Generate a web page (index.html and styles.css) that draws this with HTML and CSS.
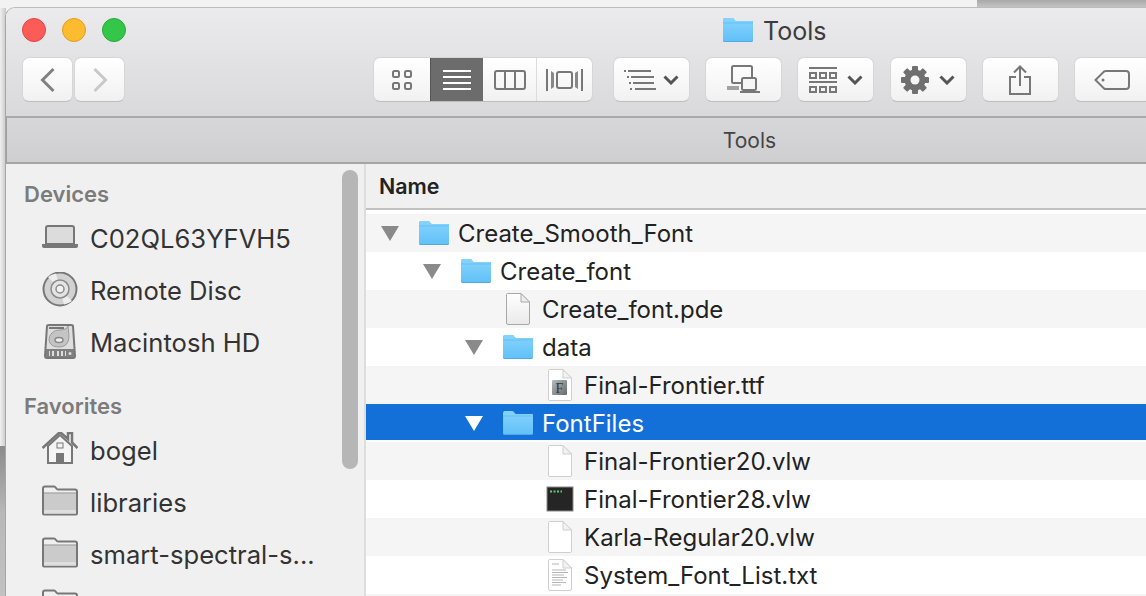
FILE: index.html
```html
<!DOCTYPE html>
<html lang="en">
<head>
    <meta charset="UTF-8">
    <title>Tools</title>
    <link rel="stylesheet" href="styles.css">
</head>
<body>
<svg class="defs" width="0" height="0">
    <defs>
        <linearGradient id="blue" x1="0" y1="0" x2="0" y2="1">
            <stop offset="0" stop-color="#86d4fc"/>
            <stop offset="1" stop-color="#62c1f8"/>
        </linearGradient>
        <linearGradient id="paper" x1="0" y1="0" x2="0" y2="1">
            <stop offset="0" stop-color="#ffffff"/>
            <stop offset="1" stop-color="#e9e9e9"/>
        </linearGradient>
        <linearGradient id="tile" x1="0" y1="0" x2="1" y2="1">
            <stop offset="0" stop-color="#b4babc"/>
            <stop offset="1" stop-color="#666b6d"/>
        </linearGradient>
        <symbol id="folder" viewBox="0 0 30 24">
            <path d="M0 3 Q0 0 2 0 H9 Q10.500 0 11.500 2 Q12 3 13 3 H29 Q30 3 30 4 V22.500 Q30 24 28.500 24 H1.500 Q0 24 0 22.500Z" fill="#4fabe3"/>
            <path d="M0 3 Q0 0 2 0 H9 Q10.500 0 11.500 2 Q12 3 13 3 H29 Q30 3 30 4 V21.500 Q30 23 28.500 23 H1.500 Q0 23 0 21.500Z" fill="url(#blue)"/>
            <path d="M0 5 H30" stroke="#5bbcf3" stroke-width="1" opacity=".7"/>
        </symbol>
        <symbol id="doc" viewBox="0 0 24 32">
            <path d="M1.500 .5 H15 L23.500 9 V30 Q23.500 31.500 22 31.500 H2 Q.5 31.500 .5 30 V1.500 Q.5 .5 1.500 .5Z" fill="#fff" stroke="#cfcfcf"/>
            <path d="M15 .5 V9 H23.500Z" fill="#f2f2f2" stroke="#cfcfcf"/>
        </symbol>
        <symbol id="greyfolder" viewBox="0 0 36 33">
            <path d="M1 28 V3 Q1 1 3 1 H12 Q13 1 14 2.500 Q15 4 16 4 H33 Q35 4 35 6 V28 Q35 29 34 29 H2 Q1 29 1 28Z" fill="#f0f0f0" stroke="#777" stroke-width="2"/>
            <path d="M2 8 H34 V25 H2Z" fill="#cbcbcb"/>
            <path d="M2 25 H34 V28 H2Z" fill="#dedede"/>
            <path d="M2 7.500 H34" stroke="#8c8c8c"/>
        </symbol>
        <symbol id="chev" viewBox="0 0 16 10">
            <path d="M1.500 1.500 L8 8 L14.500 1.500" fill="none" stroke="#555" stroke-width="3"/>
        </symbol>
    </defs>
</svg>

<div class="window">
    <header class="titlebar">
        <div class="title-row">
            <div class="lights">
                <span class="light red"></span>
                <span class="light yellow"></span>
                <span class="light green"></span>
            </div>
            <div class="title">
                <svg class="folder-icon"><use href="#folder"/></svg>
                <span class="title-text">Tools</span>
            </div>
        </div>
        <div class="toolbar">
            <div class="nav">
                <button class="btn nav-btn">
                    <svg width="16" height="26" viewBox="0 0 16 26"><path d="M13.500 2 L2.500 13 L13.500 24" fill="none" stroke="#808080" stroke-width="3"/></svg>
                </button>
                <button class="btn nav-btn">
                    <svg width="16" height="26" viewBox="0 0 16 26"><path d="M2.500 2 L13.500 13 L2.500 24" fill="none" stroke="#c8c8c8" stroke-width="3"/></svg>
                </button>
            </div>
            <div class="view-group">
                <div class="seg seg-icons">
                    <svg width="22" height="22" viewBox="0 0 22 22" fill="none" stroke="#777" stroke-width="2">
                        <rect x="2" y="2" width="6" height="6" rx="1.500"/><rect x="14" y="2" width="6" height="6" rx="1.500"/>
                        <rect x="2" y="14" width="6" height="6" rx="1.500"/><rect x="14" y="14" width="6" height="6" rx="1.500"/>
                    </svg>
                </div>
                <div class="seg seg-list">
                    <svg width="28" height="20" viewBox="0 0 28 20" stroke="#fff" stroke-width="2">
                        <path d="M0 1 H28 M0 7 H28 M0 13 H28 M0 19 H28"/>
                    </svg>
                </div>
                <div class="seg seg-cols">
                    <svg width="32" height="20" viewBox="0 0 32 20" fill="none" stroke="#777" stroke-width="2">
                        <rect x="1" y="1" width="30" height="18" rx="2"/><path d="M11 1 V19 M21 1 V19"/>
                    </svg>
                </div>
                <div class="seg seg-flow">
                    <svg width="37" height="22" viewBox="0 0 37 22" fill="none" stroke="#777">
                        <path d="M1 0 V22" stroke-width="2"/>
                        <path d="M5 2 L8 4 V18 L5 20Z" fill="#888" stroke="none"/>
                        <rect x="11" y="3" width="15" height="16" rx="2" stroke-width="2"/>
                        <path d="M32 2 L29 4 V18 L32 20Z" fill="#888" stroke="none"/>
                        <path d="M36 0 V22" stroke-width="2"/>
                    </svg>
                </div>
            </div>
            <button class="btn tool tool-arrange">
                <svg width="32" height="20" viewBox="0 0 32 20" stroke="#777" stroke-width="2" fill="none">
                    <path d="M0 1 H2 M4 1 H27 M3 7 H5 M7 7 H30 M5 13 H7 M9 13 H30 M6 19 H8 M11 19 H32"/>
                </svg>
                <svg class="chev"><use href="#chev"/></svg>
            </button>
            <button class="btn tool">
                <svg width="34" height="30" viewBox="0 0 34 30" fill="none">
                    <rect x="5" y="1" width="20" height="17" rx="1.500" stroke="#777" stroke-width="2"/>
                    <path d="M0 21 H12 V25 H0Z" fill="#a2a2a2"/>
                    <rect x="15" y="13" width="14" height="12" rx="1.500" fill="#f6f6f6" stroke="#777" stroke-width="2"/>
                    <path d="M13 26 H33 V28 H13Z" fill="#777"/>
                </svg>
            </button>
            <button class="btn tool">
                <svg width="28" height="26" viewBox="0 0 28 26" stroke="#777" fill="none">
                    <path d="M0 1 H28 M0 15 H28" stroke-width="2"/>
                    <g stroke-width="2">
                        <rect x="1" y="6" width="6" height="5"/><rect x="11" y="6" width="6" height="5"/><rect x="21" y="6" width="6" height="5"/>
                        <rect x="1" y="20" width="6" height="5"/><rect x="11" y="20" width="6" height="5"/><rect x="21" y="20" width="6" height="5"/>
                    </g>
                </svg>
                <svg class="chev"><use href="#chev"/></svg>
            </button>
            <button class="btn tool">
                <svg width="28" height="28" viewBox="0 0 28 28">
                    <g fill="#707070">
                        <rect x="11" y="0" width="6" height="28" rx="1"/>
                        <rect x="11" y="0" width="6" height="28" rx="1" transform="rotate(45 14 14)"/>
                        <rect x="11" y="0" width="6" height="28" rx="1" transform="rotate(90 14 14)"/>
                        <rect x="11" y="0" width="6" height="28" rx="1" transform="rotate(135 14 14)"/>
                        <circle cx="14" cy="14" r="10.500"/>
                    </g>
                    <circle cx="14" cy="14" r="4.500" fill="#f8f8f8"/>
                </svg>
                <svg class="chev"><use href="#chev"/></svg>
            </button>
            <button class="btn tool">
                <svg width="22" height="30" viewBox="0 0 22 30" fill="none" stroke="#777" stroke-width="2">
                    <path d="M7 12 H1 V29 H21 V12 H15"/>
                    <path d="M11 21 V2 M5 7.500 L11 1.500 L17 7.500"/>
                </svg>
            </button>
            <button class="btn tool">
                <svg width="36" height="22" viewBox="0 0 36 22" fill="none" stroke="#777" stroke-width="2">
                    <path d="M1.500 11 L10 2.500 Q11 2 12 2 H32 Q35 2 35 5 V17 Q35 20 32 20 H12 Q11 20 10 19.500Z"/>
                    <circle cx="9" cy="11" r="1.500" fill="#777" stroke="none"/>
                </svg>
            </button>
        </div>
    </header>

    <div class="tabbar">Tools</div>

    <div class="content">
        <aside class="sidebar">
            <div class="scrollbar"></div>
            <h3 class="side-head">Devices</h3>
            <div class="side-item">
                <svg class="side-icon" viewBox="0 4 36 36">
                    <path d="M4 28 V12 Q4 10 6 10 H30 Q32 10 32 12 V28Z" fill="#dcdcdc" stroke="#777" stroke-width="2"/>
                    <path d="M0 28 H36 V30 Q36 32 34 32 H2 Q0 32 0 30Z" fill="#777"/>
                </svg>
                <span>C02QL63YFVH5</span>
            </div>
            <div class="side-item">
                <svg class="side-icon" viewBox="0 1 36 36">
                    <circle cx="18" cy="18" r="16.500" fill="#d2d2d2" stroke="#777" stroke-width="2"/>
                    <path d="M18 18 L6 6 A17 17 0 0 1 14 2.500Z M18 18 L30 30 A17 17 0 0 1 22 33.500Z" fill="#eeeeee"/>
                    <circle cx="18" cy="18" r="9" fill="#e4e4e4" stroke="#8a8a8a" stroke-width="1.500"/>
                    <circle cx="18" cy="18" r="4" fill="#f2f2f2" stroke="#8a8a8a" stroke-width="1.500"/>
                </svg>
                <span>Remote Disc</span>
            </div>
            <div class="side-item">
                <svg class="side-icon" viewBox="0 1 36 36">
                    <path d="M5 3 Q5 2 7 2 H29 Q31 2 31 3 L33 33 Q33 35 31 35 H5 Q3 35 3 33Z" fill="#dedede" stroke="#777" stroke-width="2"/>
                    <path d="M7 5 H22" stroke="#777" stroke-width="2"/>
                    <path d="M7 17 A10 10 0 0 1 17 7 Q25 7 26 3 L27 13 Q27 24 17 24 Q8 24 7 17Z" fill="#c4c4c4" stroke="#9c9c9c"/>
                    <ellipse cx="17" cy="17" rx="4" ry="2.500" fill="#eee" stroke="#888" stroke-width="1.500"/>
                    <path d="M4 26 H32 V34 H4Z" fill="#7f7f7f"/>
                    <path d="M10 28 H12 V33 H10Z M15 28 H17 V33 H15Z M19 28 H21 V33 H19Z M23 28 H24 V33 H23Z M7 28 H8 V33 H7Z" fill="#dedede"/>
                    <circle cx="28" cy="30.500" r="1.500" fill="#dedede"/>
                </svg>
                <span>Macintosh HD</span>
            </div>
            <h3 class="side-head fav-head">Favorites</h3>
            <div class="side-item">
                <svg class="side-icon" viewBox="0 2 36 36">
                    <path d="M6 33 V16 L18 5 L30 16 V33Z" fill="#f4f4f4" stroke="#777" stroke-width="2"/>
                    <path d="M0.500 18 L18 2 L26 9 V3 H30 V12.500 L35.500 18" fill="none" stroke="#777" stroke-width="2.500"/>
                    <rect x="15" y="13" width="6" height="5" fill="none" stroke="#777"/>
                    <rect x="14" y="23" width="8" height="11" fill="#777"/>
                </svg>
                <span>bogel</span>
            </div>
            <div class="side-item">
                <svg class="side-icon"><use href="#greyfolder"/></svg>
                <span>libraries</span>
            </div>
            <div class="side-item">
                <svg class="side-icon"><use href="#greyfolder"/></svg>
                <span>smart-spectral-s...</span>
            </div>
            <div class="side-item">
                <svg class="side-icon"><use href="#greyfolder"/></svg>
            </div>
        </aside>

        <main class="files">
            <div class="col-head">Name</div>
            <div class="rows">
                <div class="row odd d0">
                    <span class="tri"></span>
                    <span class="ico"><svg class="folder-icon"><use href="#folder"/></svg></span>
                    <span>Create_Smooth_Font</span>
                </div>
                <div class="row d1">
                    <span class="tri"></span>
                    <span class="ico"><svg class="folder-icon"><use href="#folder"/></svg></span>
                    <span>Create_font</span>
                </div>
                <div class="row odd d2">
                    <span class="tri none"></span>
                    <span class="ico"><svg class="doc-icon" viewBox="0 0 24 32">
                        <path d="M1.500 .5 H15 L23.500 9 V30 Q23.500 31.500 22 31.500 H2 Q.5 31.500 .5 30 V1.500 Q.5 .5 1.500 .5Z" fill="url(#paper)" stroke="#a8a8a8"/>
                        <path d="M15 .5 V9 H23.500Z" fill="#eee" stroke="#a8a8a8"/>
                    </svg></span>
                    <span>Create_font.pde</span>
                </div>
                <div class="row d2">
                    <span class="tri"></span>
                    <span class="ico"><svg class="folder-icon"><use href="#folder"/></svg></span>
                    <span>data</span>
                </div>
                <div class="row odd d3">
                    <span class="tri none"></span>
                    <span class="ico"><svg class="doc-icon" viewBox="0 0 24 32">
                        <use href="#doc" width="24" height="32"/>
                        <rect x="4" y="11" width="15" height="15" rx="1" fill="url(#tile)"/>
                        <text x="11.500" y="23.500" class="tile-letter">F</text>
                    </svg></span>
                    <span>Final-Frontier.ttf</span>
                </div>
                <div class="row selected d2">
                    <span class="tri"></span>
                    <span class="ico"><svg class="folder-icon"><use href="#folder"/></svg></span>
                    <span>FontFiles</span>
                </div>
                <div class="row odd d3">
                    <span class="tri none"></span>
                    <span class="ico"><svg class="doc-icon"><use href="#doc"/></svg></span>
                    <span>Final-Frontier20.vlw</span>
                </div>
                <div class="row d3">
                    <span class="tri none"></span>
                    <span class="ico"><svg class="term-icon" viewBox="0 0 28 26">
                        <rect x="1" y="1" width="26" height="24" fill="#252525" stroke="#8a8a8a"/>
                        <path d="M4 5.500 H6 M7.500 5.500 H9.500 M11 5.500 H13 M14.500 5.500 H16" stroke="#5fcf6a" stroke-width="2"/>
                    </svg></span>
                    <span>Final-Frontier28.vlw</span>
                </div>
                <div class="row odd d3">
                    <span class="tri none"></span>
                    <span class="ico"><svg class="doc-icon"><use href="#doc"/></svg></span>
                    <span>Karla-Regular20.vlw</span>
                </div>
                <div class="row d3">
                    <span class="tri none"></span>
                    <span class="ico"><svg class="doc-icon" viewBox="0 0 24 32">
                        <use href="#doc" width="24" height="32"/>
                        <path d="M4 5 H11 M4 11 H18 M4 13.500 H20 M4 16 H16 M4 18.500 H19 M4 21 H15 M4 23.500 H18 M4 26 H13" stroke="#b5b5b5"/>
                    </svg></span>
                    <span>System_Font_List.txt</span>
                </div>
                <div class="row odd d3"></div>
            </div>
        </main>
    </div>
</div>
</body>
</html>
```

FILE: styles.css
```css
* {
    padding: 0;
    margin: 0;
    box-sizing: border-box;
}

html, body {
    height: 100%;
    overflow: hidden;
}

body {
    padding: 7px 0 0 5px;
    font-family: Inter, "Liberation Sans", sans-serif;
    color: #262626;
    background:
        linear-gradient(#a9a9a9, #c6c6c6) 977px 0 / 169px 8px no-repeat,
        linear-gradient(#8b8b8b, #b8b8b8 45%, #c2c2c2) 0 446px / 6px 150px no-repeat,
        linear-gradient(90deg, #f0f0f0, #c8c8c8) 0 8px / 6px 438px no-repeat,
        #f2f2f2;
}

.defs {
    position: absolute;
}

svg {
    display: block;
}

.window {
    width: 1141px;
    height: 589px;
    display: flex;
    flex-direction: column;
    overflow: hidden;
    border-top: 1px solid #bcbcbc;
    border-left: 1px solid #a6a6a6;
    border-top-left-radius: 10px;
    background: #f1f0f0;
}

/* title bar */
.titlebar {
    height: 108px;
    padding: 10px 0 0 16px;
    background: linear-gradient(#ebeaec, #d9d8da);
}

.title-row {
    height: 39px;
    display: flex;
    position: relative;
}

.lights {
    display: flex;
    gap: 16px;
}

.light {
    width: 24px;
    height: 24px;
    border-radius: 50%;
    border: 1px solid;
}

.red {
    background: #fc5c57;
    border-color: #e2463f;
}

.yellow {
    background: #fdbb2f;
    border-color: #e09e1e;
}

.green {
    background: #33c648;
    border-color: #28a93a;
}

.title {
    position: absolute;
    left: 701px;
    top: 0;
    display: flex;
    align-items: center;
    gap: 10px;
    height: 24px;
    font-size: 25px;
    color: #3c3c3c;
}

.title-text {
    padding-top: 2px;
}

.folder-icon {
    width: 30px;
    height: 24px;
}

.toolbar {
    display: flex;
    height: 46px;
}

.btn {
    height: 45px;
    flex: none;
    display: flex;
    align-items: center;
    justify-content: center;
    gap: 10px;
    border: 1px solid #d6d6d6;
    border-bottom-color: #bdbdbd;
    border-radius: 7px;
    background: linear-gradient(#ffffff, #f1f1f1);
}

.nav {
    display: flex;
    flex: none;
    gap: 1px;
    width: 351px;
}

.nav-btn {
    width: 51px;
}

.view-group {
    width: 219.5px;
    height: 45px;
    flex: none;
    display: flex;
    overflow: hidden;
    border: 1px solid #d6d6d6;
    border-bottom-color: #bdbdbd;
    border-radius: 7px;
    background: linear-gradient(#ffffff, #f1f1f1);
}

.seg {
    display: flex;
    align-items: center;
    justify-content: center;
}

.seg-icons {
    width: 56px;
}

.seg-list {
    width: 53px;
    background: #6c6c6c;
    border-left: 1px solid #555;
}

.seg-cols {
    width: 54px;
    border-right: 1px solid #dcdcdc;
}

.seg-flow {
    flex: 1;
}

.tool {
    width: 77px;
    margin-left: 15.2px;
}

.tool-arrange {
    margin-left: 20.5px;
    gap: 7px;
}

.chev {
    width: 16px;
    height: 10px;
}

.tabbar {
    height: 48px;
    line-height: 46px;
    text-align: center;
    font-size: 21px;
    padding-left: 346px;
    color: #444;
    border-top: 2px solid #a9a9a9;
    border-bottom: 2px solid #a5a5a5;
    border-left: 1px solid #a0a0a0;
    background: linear-gradient(#d7d6d8, #cfced0);
}

/* sidebar */
.content {
    flex: 1;
    display: flex;
    min-height: 0;
}

.sidebar {
    width: 360px;
    flex: none;
    padding: 17px 0 0 18px;
    position: relative;
    border-right: 2px solid #dddddd;
    background: #f1f0f0;
}

.scrollbar {
    position: absolute;
    left: 336px;
    top: 6px;
    width: 16px;
    height: 299px;
    border-radius: 8px;
    background: #b6b6b6;
}

.side-head {
    height: 31px;
    line-height: 26px;
    font-size: 22px;
    font-weight: 600;
    color: #7b7b7b;
}

.fav-head {
    margin-top: 25px;
}

.side-item {
    height: 52px;
    display: flex;
    align-items: center;
    gap: 12px;
    padding-left: 18px;
    font-size: 25.6px;
    color: #333;
    white-space: nowrap;
}

.side-icon {
    width: 36px;
    height: 36px;
    flex: none;
}

/* file list */
.files {
    flex: 1;
    background: #fff;
}

.col-head {
    height: 46px;
    padding-left: 13px;
    line-height: 44px;
    font-size: 21.4px;
    font-weight: 600;
    color: #222;
    background: #f0f0f0;
    border-bottom: 2px solid #c2c2c2;
}

.rows {
    padding-top: 4px;
}

.row {
    height: 38px;
    display: flex;
    align-items: center;
    font-size: 24px;
    color: #222;
    white-space: nowrap;
}

.odd {
    background: #f5f5f5;
}

.selected {
    height: 36px;
    margin-bottom: 2px;
    padding-top: 2px;
    color: #fff;
    background: #1270d8;
}

.d0 {
    padding-left: 14px;
}

.d1 {
    padding-left: 56px;
}

.d2 {
    padding-left: 98px;
}

.d3 {
    padding-left: 140px;
}

.tri {
    width: 39px;
    height: 15px;
    flex: none;
}

.tri::before {
    content: "";
    display: block;
    width: 0;
    height: 0;
    margin-left: 1px;
    border-left: 9px solid transparent;
    border-right: 9px solid transparent;
    border-top: 15px solid #8a8a8a;
}

.tri.none::before {
    display: none;
}

.selected .tri::before {
    border-top-color: #fff;
}

.ico {
    width: 30px;
    margin-right: 9px;
    flex: none;
    display: flex;
    justify-content: center;
}

.doc-icon {
    width: 24px;
    height: 32px;
}

.term-icon {
    width: 28px;
    height: 26px;
}

.tile-letter {
    font: 14px "Liberation Serif", serif;
    fill: #33383a;
    text-anchor: middle;
}
```
